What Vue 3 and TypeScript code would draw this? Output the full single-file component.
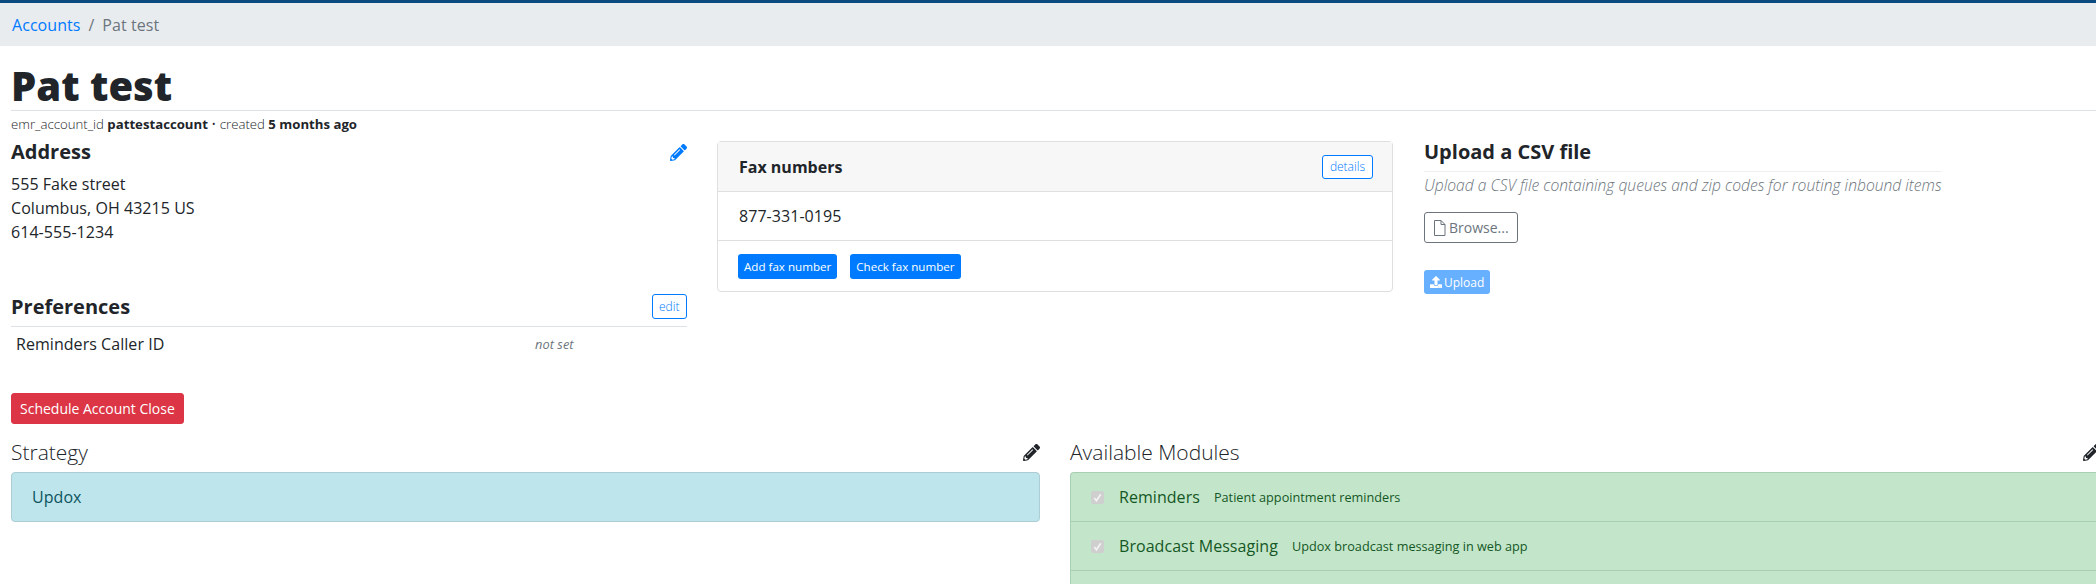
<script setup lang="ts">
interface Mod { name: string; desc: string }
const modules: Mod[] = [
  { name: 'Reminders', desc: 'Patient appointment reminders' },
  { name: 'Broadcast Messaging', desc: 'Updox broadcast messaging in web app' },
  { name: '', desc: '' },
]
const penPath = 'M497.9 142.1l-46.1 46.1c-4.7 4.7-12.3 4.7-17 0l-111-111c-4.7-4.7-4.7-12.3 0-17l46.1-46.1c18.7-18.7 49.1-18.7 67.9 0l60.1 60.1c18.8 18.7 18.8 49.1 0 67.9zM284.2 99.8L21.6 362.4.4 483.9c-2.9 16.4 11.4 30.6 27.8 27.8l121.5-21.3 262.6-262.6c4.7-4.7 4.7-12.3 0-17l-111-111c-4.8-4.7-12.4-4.7-17.1 0zM124.1 339.9c-5.5-5.5-5.5-14.3 0-19.8l154-154c5.5-5.5 14.3-5.5 19.8 0s5.5 14.3 0 19.8l-154 154c-5.5 5.5-14.3 5.5-19.8 0zM88 424h48v36.3l-64.5 11.3-31.1-31.1L51.7 376H88v48z'
const uploadPath = 'M296 384h-80c-13.3 0-24-10.7-24-24V192h-87.7c-17.8 0-26.7-21.5-14.1-34.1L242.3 5.7c7.5-7.5 19.8-7.5 27.3 0l152.2 152.2c12.6 12.6 3.7 34.1-14.1 34.1H320v168c0 13.3-10.7 24-24 24zm216-8v112c0 13.3-10.7 24-24 24H24c-13.3 0-24-10.7-24-24V376c0-13.3 10.7-24 24-24h136v8c0 30.9 25.1 56 56 56h80c30.9 0 56-25.1 56-56v-8h136c13.3 0 24 10.7 24 24zm-124 88c0-11-9-20-20-20s-20 9-20 20 9 20 20 20 20-9 20-20zm64 0c0-11-9-20-20-20s-20 9-20 20 9 20 20 20 20-9 20-20z'
</script>

<template>
  <div class="page">
    <nav class="crumbs"><a class="link">Accounts</a><span class="sep">/</span><span class="cur">Pat test</span></nav>
    <div class="content">
      <h1 class="title">Pat test</h1>
      <div class="meta">emr_account_id <b>pattestaccount</b> • created <b>5 months ago</b></div>
      <div class="top">
        <section class="col-a">
          <div class="head-row">
            <h4 class="h4">Address</h4>
            <svg class="pen blue" viewBox="0 0 512 512"><path fill="currentColor" :d="penPath"/></svg>
          </div>
          <address class="addr">555 Fake street<br>Columbus, OH 43215 US<br>614-555-1234</address>
          <div class="pref-head">
            <h4 class="h4">Preferences</h4>
            <button class="btn-outline edit">edit</button>
          </div>
          <div class="pref-row"><span class="pref-name">Reminders Caller ID</span><em class="pref-val">not set</em></div>
          <button class="danger">Schedule Account Close</button>
        </section>
        <section class="col-b">
          <div class="card">
            <div class="card-head"><span class="card-title">Fax numbers</span><button class="btn-outline details">details</button></div>
            <div class="card-row">877-331-0195</div>
            <div class="card-foot"><button class="btn-sm">Add fax number</button><button class="btn-sm">Check fax number</button></div>
          </div>
        </section>
        <section class="col-c">
          <h4 class="h4 ruled">Upload a CSV file</h4>
          <p class="hint">Upload a CSV file containing queues and zip codes for routing inbound items</p>
          <button class="browse">
            <svg class="file" viewBox="0 0 13 16"><path fill="none" stroke="currentColor" d="M1.5.5h6.5l4 4v11h-10.500zM8 .5v4h4"/></svg>Browse...
          </button>
          <button class="upload">
            <svg class="up" viewBox="0 0 512 512"><path fill="currentColor" :d="uploadPath"/></svg>Upload
          </button>
        </section>
      </div>
      <div class="bottom">
        <section>
          <div class="mod-head"><span class="h5">Strategy</span><svg class="pen dark" viewBox="0 0 512 512"><path fill="currentColor" :d="penPath"/></svg></div>
          <div class="strategy">Updox</div>
        </section>
        <section class="mods">
          <div class="mod-head"><span class="h5">Available Modules</span><svg class="pen dark" viewBox="0 0 512 512"><path fill="currentColor" :d="penPath"/></svg></div>
          <div class="mod-list">
            <div v-for="(m, i) in modules" :key="i" class="mod-row">
              <template v-if="m.name">
                <span class="check"><svg viewBox="0 0 12 12"><path fill="none" stroke="#f2f2f2" stroke-width="1.6" d="M3 6.5l2 2.5 4-6"/></svg></span>
                <span class="mod-name">{{ m.name }}</span><small class="mod-desc">{{ m.desc }}</small>
              </template>
            </div>
          </div>
        </section>
      </div>
    </div>
  </div>
</template>

<style>
html, body { margin: 0; overflow: hidden; background: #fff; }
</style>

<style scoped>
.page { width: 2096px; height: 584px; overflow: hidden; border-top: 3px solid #0b4a80; box-sizing: border-box; font-family: "Open Sans", sans-serif; font-weight: 380; letter-spacing: 0.05px; font-size: 16px; line-height: 24px; color: #212529; }
.crumbs { height: 43px; background: #e9ecef; display: flex; align-items: center; padding-left: 12px; }
.link { color: #007bff; }
.sep { color: #6c757d; padding: 0 8px; }
.cur { color: #6c757d; }
.content { padding: 0 0 0 11px; }
.title { margin: 16px 0 0; font-size: 40px; line-height: 48px; font-weight: 800; letter-spacing: 0; border-bottom: 1px solid #dee2e6; }
.meta { font-size: 13.2px; line-height: 18px; margin-top: 4px; font-weight: 320; letter-spacing: 0; }
.meta b { font-weight: 700; }
.top { display: flex; height: 298px; margin-top: 5px; }
.col-a { width: 676px; flex: none; }
.head-row { display: flex; justify-content: space-between; align-items: center; height: 27px; }
.h4 { margin: 0; font-size: 20px; line-height: 27px; font-weight: 700; letter-spacing: 0; }
.ruled { padding-bottom: 6px; border-bottom: 1px solid #eee; }
.pen { width: 17px; height: 17px; flex: none; }
.blue { color: #007bff; margin-top: 2px; }
.dark { color: #212529; }
.addr { font-style: normal; margin: 7px 0 0; }
.pref-head { display: flex; justify-content: space-between; align-items: center; height: 39px; margin-top: 43px; border-bottom: 1px solid #dee2e6; }
.btn-outline { background: #fff; border: 1px solid #007bff; border-radius: 3px; color: #007bff; font: 300 12px/16px "Open Sans", sans-serif; padding: 0 6.5px; height: 25px; }
.pref-row { display: flex; height: 34px; align-items: center; padding-left: 5px; }
.pref-name { width: 519px; }
.pref-val { font-size: 12.8px; color: #6c757d; }
.danger { display: block; margin-top: 32px; background: #dc3545; border: 1px solid #dc3545; border-radius: 3px; color: #fff; font: 400 14px/21px "Open Sans", sans-serif; height: 31px; padding: 0 8px; }
.col-b { width: 737px; flex: none; padding: 3px 31px 0 30px; box-sizing: border-box; }
.card { height: 151px; box-sizing: border-box; border: 1px solid #dfdfdf; border-radius: 4px; }
.card-head { height: 50px; box-sizing: border-box; background: #f7f7f7; border-bottom: 1px solid #dfdfdf; display: flex; justify-content: space-between; align-items: center; padding: 0 19px 0 21px; }
.card-title { font-weight: 700; letter-spacing: 0; }
.details { height: 24px; padding: 0 7px; }
.card-row { height: 49px; box-sizing: border-box; border-bottom: 1px solid #dfdfdf; display: flex; align-items: center; padding-left: 21px; }
.card-foot { display: flex; gap: 13px; padding: 13px 20px; }
.btn-sm { background: #007bff; color: #fff; border: 0; border-radius: 3px; height: 25px; padding: 0 6px; font: 400 11.6px/16px "Open Sans", sans-serif; }
.col-c { width: 517px; flex: none; }
.hint { margin: 1px 0 0; font-style: italic; color: #6c757d; font-weight: 300; font-size: 15.65px; letter-spacing: 0; white-space: nowrap; }
.browse { display: flex; align-items: center; gap: 3px; margin-top: 15px; height: 31px; padding: 0 8px; background: #fff; border: 1px solid #6c757d; border-radius: 3px; color: #6c757d; font: 400 14px "Open Sans", sans-serif; }
.file { width: 13px; height: 16px; }
.upload { display: flex; align-items: center; gap: 2px; margin-top: 27px; height: 24px; padding: 0 6px; background: #66b0ff; border: 0; border-radius: 3px; color: #fff; font: 400 12px "Open Sans", sans-serif; }
.up { width: 12px; height: 12px; }
.bottom { display: grid; grid-template-columns: 1029px 1030px; column-gap: 30px; }
.mod-head { display: flex; justify-content: space-between; align-items: center; height: 32px; }
.h5 { font-size: 21px; font-weight: 300; letter-spacing: 0; }
.strategy { margin-top: 4px; height: 50px; box-sizing: border-box; background: #bee5eb; border: 1px solid #abcdd3; border-radius: 4px; padding: 0 20px; display: flex; align-items: center; color: #0c5460; }
.mod-list { margin-top: 4px; background: #c3e6cb; border: 1px solid #a9cfb3; border-radius: 4px 0 0 4px; border-right: 0; }
.mod-row { height: 48px; display: flex; align-items: center; padding-left: 20px; border-bottom: 1px solid #a9cfb3; color: #155724; }
.check { width: 13px; height: 13px; background: #cfcfcf; border-radius: 2px; display: inline-flex; margin-right: 15px; }
.check svg { width: 13px; height: 13px; }
.mod-desc { font-size: 12.7px; margin-left: 14px; letter-spacing: 0; }
</style>
